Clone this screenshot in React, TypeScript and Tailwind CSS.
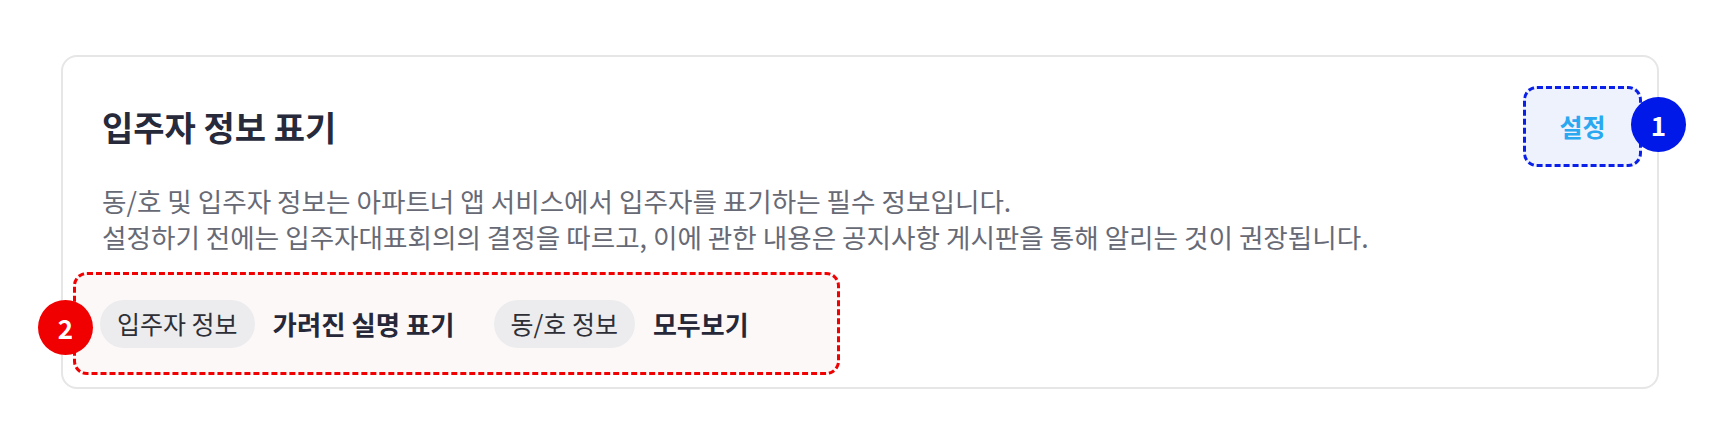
export default function App() {
    return (
        <div className="min-h-screen bg-white pt-[55px] pl-[61px] pr-[57px] font-['Noto_Sans_CJK_KR','Noto_Sans',sans-serif]">
            <div className="relative h-[334px] rounded-[16px] border-2 border-[#e6e6e6] bg-white pl-[10px] pr-[15px] pt-[29px]">
                {/* Header */}
                <div className="flex items-center justify-between pl-[29px]">
                    <h1 className="text-[34px] leading-none font-bold text-[#272a3a]">입주자 정보 표기</h1>
                    <div className="relative">
                        <button className="flex h-[81px] w-[119px] items-center justify-center rounded-[14px] border-[3px] border-dashed border-[#0a20e8] bg-[#eef2fd] text-[25px] font-bold text-[#2aa8f0]">
                            설정
                        </button>
                        <span className="absolute top-[11px] -right-[44px] flex h-[55px] w-[55px] items-center justify-center rounded-full bg-[#0018e8] text-[26px] font-bold text-white">
                            1
                        </span>
                    </div>
                </div>

                {/* Description */}
                <div className="mt-[16px] pl-[29px] text-[26.6px] leading-[36px] text-[#676a75]">
                    <p>동/호 및 입주자 정보는 아파트너 앱 서비스에서 입주자를 표기하는 필수 정보입니다.</p>
                    <p>설정하기 전에는 입주자대표회의의 결정을 따르고, 이에 관한 내용은 공지사항 게시판을 통해 알리는 것이 권장됩니다.</p>
                </div>

                {/* Current setting */}
                <div className="relative mt-[17px] flex h-[103px] w-[767px] items-center gap-[39px] rounded-[14px] border-[3px] border-dashed border-[#f00000] bg-[#fdf8f8] pl-[24px]">
                    <span className="absolute top-[25px] -left-[38px] flex h-[55px] w-[55px] items-center justify-center rounded-full bg-[#f00000] text-[26px] font-bold text-white">
                        2
                    </span>
                    <div className="flex items-center gap-[18px]">
                        <span className="flex h-[48px] items-center rounded-full bg-[#ececee] px-[17px] text-[25px] text-[#2e2f36]">
                            입주자 정보
                        </span>
                        <span className="text-[26.4px] font-semibold text-[#262839]">가려진 실명 표기</span>
                    </div>
                    <div className="flex items-center gap-[18px]">
                        <span className="flex h-[48px] items-center rounded-full bg-[#ececee] px-[17px] text-[25px] text-[#2e2f36]">
                            동/호 정보
                        </span>
                        <span className="text-[26px] font-semibold text-[#262839]">모두보기</span>
                    </div>
                </div>
            </div>
        </div>
    );
}
